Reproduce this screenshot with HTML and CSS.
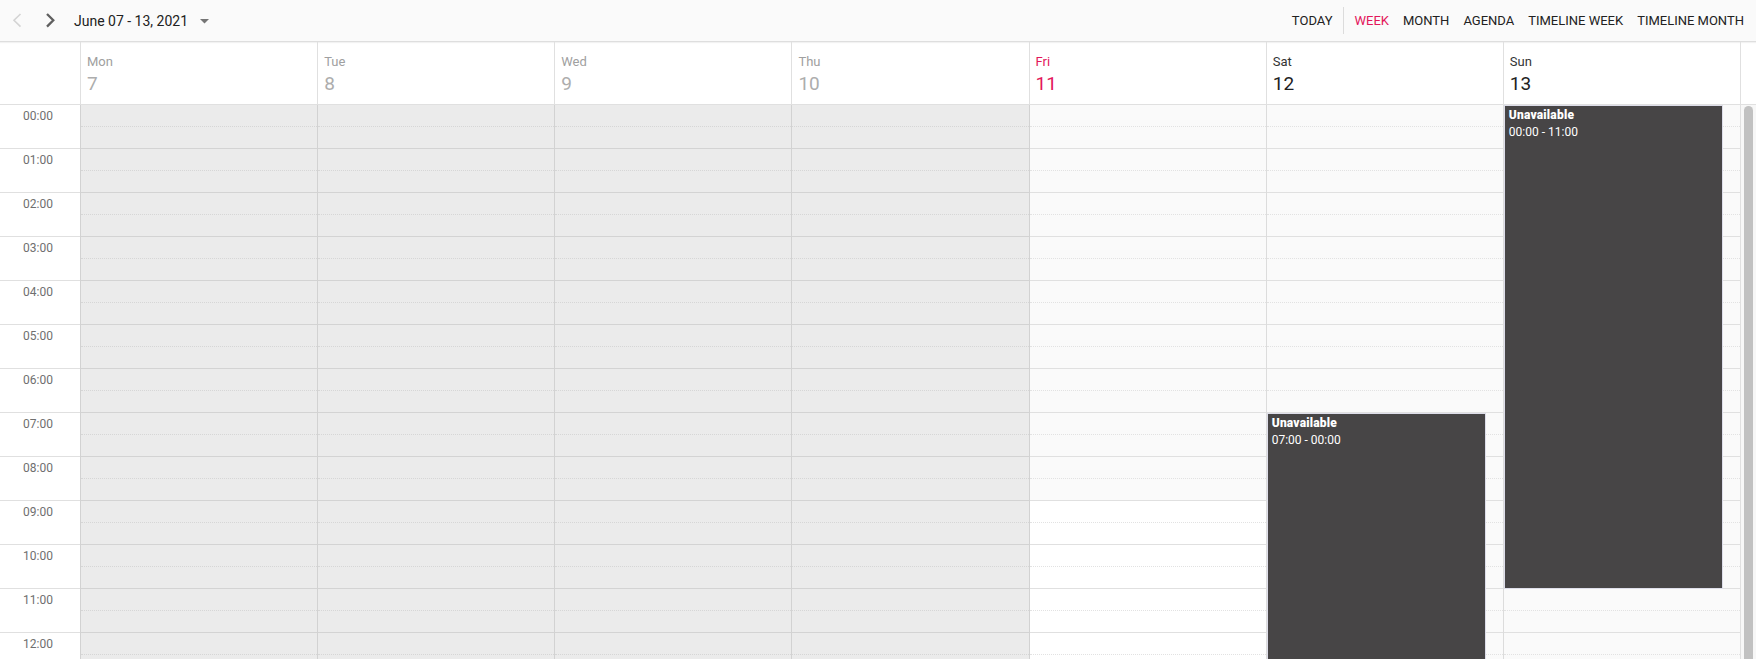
FILE: index.html
```html
<!DOCTYPE html>
<html lang="en">
<head>
<meta charset="utf-8">
<title>Scheduler - Week</title>
<link rel="stylesheet" href="styles.css">
</head>
<body>
<div class="scheduler">
  <div class="toolbar">
    <div class="tb-left">
      <svg class="nav prev" width="24" height="24" viewBox="0 0 24 24"><polyline points="16.5,5 10,11.3 16.5,17.6" fill="none" stroke="#d4d4d4" stroke-width="1.6"/></svg>
      <svg class="nav next" width="24" height="24" viewBox="0 0 24 24"><polyline points="9,5 15.3,11.3 9,17.6" fill="none" stroke="#5f5f5f" stroke-width="2.3"/></svg>
      <span class="range">June 07 - 13, 2021</span>
      <svg class="caret" width="9" height="5" viewBox="0 0 9 5"><polygon points="0,0 9,0 4.5,4.5" fill="#757575"/></svg>
    </div>
    <div class="tb-right">
      <span class="tb-item">TODAY</span>
      <span class="tb-sep"></span>
      <span class="tb-item active">WEEK</span>
      <span class="tb-item">MONTH</span>
      <span class="tb-item">AGENDA</span>
      <span class="tb-item">TIMELINE WEEK</span>
      <span class="tb-item">TIMELINE MONTH</span>
    </div>
  </div>

  <div class="header">
    <div class="hd-corner"></div>
    <div class="hd-day off"><div class="dname">Mon</div><div class="dnum">7</div></div>
    <div class="hd-day off"><div class="dname">Tue</div><div class="dnum">8</div></div>
    <div class="hd-day off"><div class="dname">Wed</div><div class="dnum">9</div></div>
    <div class="hd-day off"><div class="dname">Thu</div><div class="dnum">10</div></div>
    <div class="hd-day today"><div class="dname">Fri</div><div class="dnum">11</div></div>
    <div class="hd-day"><div class="dname">Sat</div><div class="dnum">12</div></div>
    <div class="hd-day"><div class="dname">Sun</div><div class="dnum">13</div></div>
    <div class="hd-gutter"></div>
  </div>

  <div class="body">
    <div class="times">
      <div class="time">00:00</div><div class="time">01:00</div><div class="time">02:00</div>
      <div class="time">03:00</div><div class="time">04:00</div><div class="time">05:00</div>
      <div class="time">06:00</div><div class="time">07:00</div><div class="time">08:00</div>
      <div class="time">09:00</div><div class="time">10:00</div><div class="time">11:00</div>
      <div class="time">12:00</div>
    </div>

    <div class="day off" id="d0"></div>
    <div class="day off" id="d1"></div>
    <div class="day off" id="d2"></div>
    <div class="day off" id="d3"></div>
    <div class="day fri" id="d4"></div>
    <div class="day weekend" id="d5">
      <div class="event ev-sat">
        <div class="ev-title">Unavailable</div>
        <div class="ev-time">07:00 - 00:00</div>
      </div>
    </div>
    <div class="day weekend" id="d6">
      <div class="event ev-sun">
        <div class="ev-title">Unavailable</div>
        <div class="ev-time">00:00 - 11:00</div>
      </div>
    </div>

    <div class="scrollbar"><div class="thumb"></div></div>
  </div>
</div>
<script>
  for (let d = 0; d < 7; d++) {
    const col = document.getElementById('d' + d);
    for (let h = 0; h < 14; h++) {
      const slot = document.createElement('div');
      slot.className = 'slot' + (d === 4 && h >= 9 ? ' work' : '');
      const half = document.createElement('div');
      half.className = 'half';
      slot.appendChild(half);
      col.appendChild(slot);
    }
  }
</script>
</body>
</html>
```

FILE: styles.css
```css
* { box-sizing: border-box; }

html, body {
  margin: 0;
  padding: 0;
  overflow: hidden;
  background: #ffffff;
  font-family: Roboto, "Noto Sans", "Liberation Sans", sans-serif;
  color: #212121;
}

.scheduler {
  width: 1756px;
  height: 659px;
  display: flex;
  flex-direction: column;
  overflow: hidden;
}

/* toolbar */
.toolbar {
  height: 42px;
  flex: none;
  display: flex;
  align-items: center;
  justify-content: space-between;
  background: #fafafa;
  border-bottom: 1px solid #dedede;
  box-shadow: 0 1px 1px rgba(0, 0, 0, 0.05);
  padding: 0 5px 0 4px;
}

.tb-left {
  display: flex;
  align-items: center;
  height: 41px;
}

.nav { display: block; }
.next { margin-left: 10px; }

.range {
  margin-left: 12px;
  font-size: 14px;
  line-height: 20px;
  color: #212121;
}

.caret {
  display: block;
  margin-left: 12px;
  margin-top: 1px;
}

.tb-right {
  display: flex;
  align-items: center;
  height: 41px;
}

.tb-item {
  padding: 0 7px;
  font-size: 13px;
  line-height: 20px;
  color: #212121;
}

.tb-item.active { color: #e3165b; }

.tb-sep {
  width: 1px;
  height: 27px;
  background: #dcdcdc;
  margin: 0 3px 0 4px;
}

/* header */
.header {
  height: 63px;
  flex: none;
  display: flex;
  border-bottom: 1px solid #e0e0e0;
}

.hd-corner {
  width: 80px;
  flex: none;
}

.hd-day {
  flex: 1 1 0;
  min-width: 0;
  border-left: 1px solid #e0e0e0;
  padding: 12px 0 0 6px;
  color: #212121;
}

.hd-gutter {
  width: 16px;
  flex: none;
  border-left: 1px solid #e0e0e0;
}

.dname {
  font-size: 13px;
  line-height: 16px;
  color: #333333;
}

.dnum {
  font-size: 19px;
  line-height: 24px;
  margin-top: 2px;
  color: #212121;
}

.hd-day.off .dname { color: #a0a0a0; }
.hd-day.off .dnum { color: #adadad; }
.hd-day.today .dname,
.hd-day.today .dnum { color: #e3165b; }

/* body */
.body {
  flex: 1;
  display: flex;
  min-height: 0;
  overflow: hidden;
}

.times {
  width: 80px;
  flex: none;
}

.time {
  height: 44px;
  border-bottom: 1px solid #e0e0e0;
  text-align: right;
  padding: 3px 27px 0 0;
  font-size: 12px;
  line-height: 16px;
  color: #6f6f6f;
}

.day {
  flex: 1 1 0;
  min-width: 0;
  position: relative;
  border-left: 1px solid #dcdcdc;
}

.slot {
  height: 44px;
  border-bottom: 1px solid #e0e0e0;
  background: #fafafa;
}

.half {
  height: 22px;
  border-bottom: 1px dotted #e2e2e2;
}

.day.off { border-left-color: #d2d2d2; }
.day.off .slot {
  background: #ebebeb;
  border-bottom-color: #d3d3d3;
}
.day.off .half { border-bottom-color: #d6d6d6; }

.day.fri { border-left-color: #d2d2d2; }
.slot.work { background: #ffffff; }

/* events */
.event {
  position: absolute;
  left: 0;
  right: 17px;
  background: #474546;
  border: 1px solid #dedeea;
  padding: 1px 4px 0 4px;
  color: #ffffff;
  font-size: 12px;
  line-height: 17px;
  overflow: hidden;
}

.ev-title {
  font-weight: 900;
  letter-spacing: 0.2px;
}

.ev-sat {
  top: 308px;
  height: 400px;
}

.ev-sun {
  top: 0;
  height: 484px;
}

/* scrollbar */
.scrollbar {
  width: 16px;
  flex: none;
  border-left: 1px solid #e0e0e0;
  background: #f7f7f7;
  padding: 1px 3px 0 3px;
}

.thumb {
  height: 700px;
  width: 9px;
  background: #c1c1c1;
  border-radius: 5px;
}
```
